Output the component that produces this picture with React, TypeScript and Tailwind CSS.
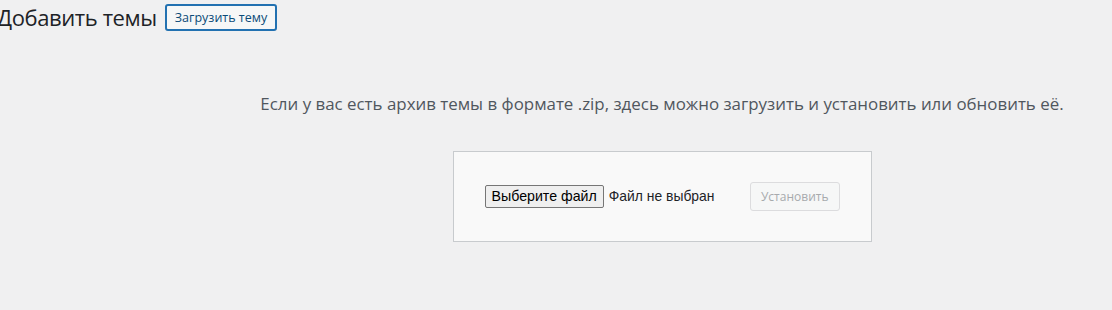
import React from "react"

const sans = "font-['Segoe_UI','Open_Sans','Noto_Sans',sans-serif]"

export default function App() {
  return (
    <div className={`min-h-[310px] w-full bg-[#f0f0f1] ${sans}`}>
      {/* Заголовок */}
      <div className="flex items-center pt-[4px]">
        <h1 className="-ml-[3px] text-[22px] font-normal leading-[27px] tracking-[-0.4px] text-[#1d2327]">Добавить темы</h1>
        <button className="ml-[8px] h-[27px] rounded-[3px] border-2 border-[#2271b1] bg-[#f6f7f7] px-[8px] text-[12.5px] leading-[23px] text-[#0a4b78]">
          Загрузить тему
        </button>
      </div>

      {/* Форма загрузки */}
      <div className="pl-[212px]">
        <p className="pt-[61px] text-center text-[16.9px] leading-[24px] text-[#50575e]">
          Если у вас есть архив темы в формате .zip, здесь можно загрузить и установить или обновить её.
        </p>
        <div className="mt-[35px] flex justify-center">
          <form className="flex w-[419px] items-center border border-[#c8cbce] bg-[#f9f9f9] px-[31px] py-[30px]">
            <button
              type="button"
              className="h-[23px] rounded-[2px] border border-[#767676] bg-[#efefef] px-[6px] font-['Liberation_Sans',Arial,sans-serif] text-[14.2px] leading-[21px] text-black"
            >
              Выберите файл
            </button>
            <span className="ml-[5px] font-['Liberation_Sans',Arial,sans-serif] text-[13.9px] text-[#1d2327]">
              Файл не выбран
            </span>
            <button
              type="button"
              disabled
              className="ml-auto h-[29px] rounded-[3px] border border-[#dcdcde] bg-[#f6f7f7] px-[10px] text-[12px] text-[#a7aaad]"
            >
              Установить
            </button>
          </form>
        </div>
      </div>
    </div>
  )
}
